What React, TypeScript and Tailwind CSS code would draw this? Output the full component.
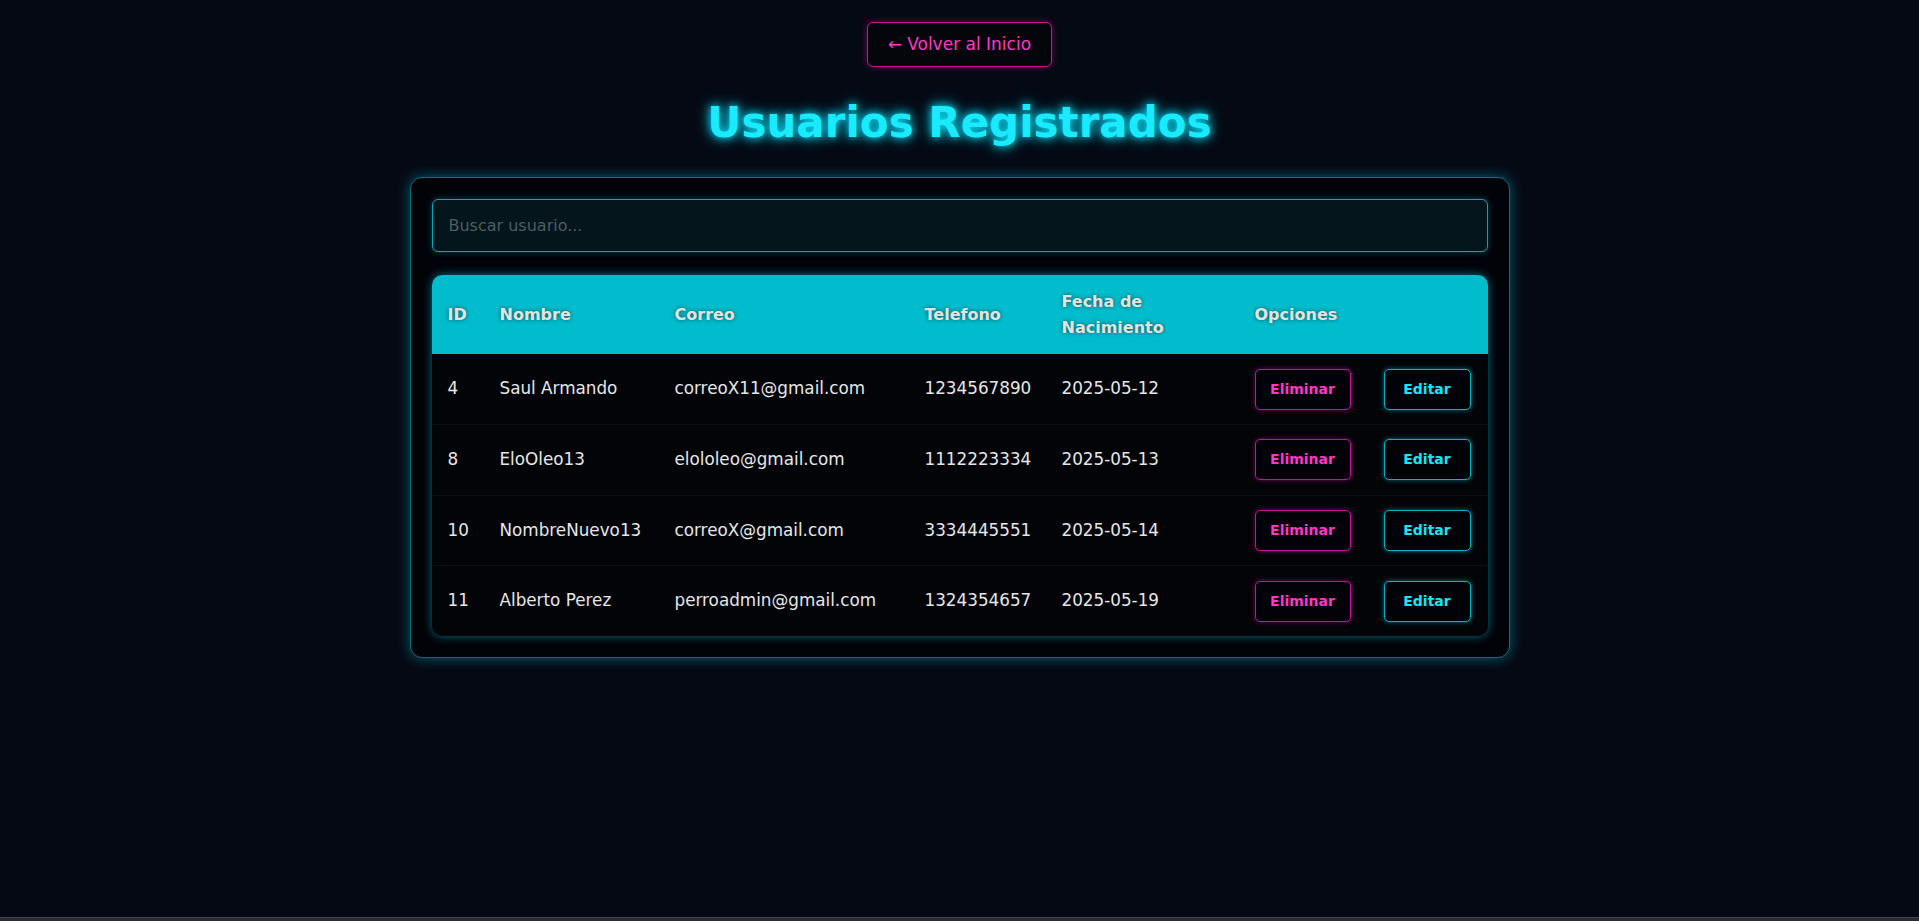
import React from "react";

const users = [
  { id: 4, nombre: "Saul Armando", correo: "correoX11@gmail.com", tel: "1234567890", fecha: "2025-05-12" },
  { id: 8, nombre: "EloOleo13", correo: "elololeo@gmail.com", tel: "1112223334", fecha: "2025-05-13" },
  { id: 10, nombre: "NombreNuevo13", correo: "correoX@gmail.com", tel: "3334445551", fecha: "2025-05-14" },
  { id: 11, nombre: "Alberto Perez", correo: "perroadmin@gmail.com", tel: "1324354657", fecha: "2025-05-19" },
];

const thCls =
  "px-[16px] py-[13px] text-[16px] leading-[26px] font-bold text-[#e4e2df] [text-shadow:0_0_4px_rgba(0,0,0,0.55)]";

export default function App() {
  return (
    <div className="h-[921px] flex flex-col bg-[#050914] font-['DejaVu_Sans','Open_Sans',sans-serif] overflow-hidden">
      <main className="flex-1 flex flex-col items-center pt-[22px]">
        <button className="h-[45px] w-[185px] rounded-[6px] border border-[#c4139a] bg-[#04060c] text-[#ff36c6] text-[17px] shadow-[0_0_6px_rgba(255,0,180,0.45)] flex items-center justify-center gap-[5px]">
          <span>←</span>
          <span>Volver al Inicio</span>
        </button>

        <h1 className="mt-[30px] text-[42px] leading-[52px] font-bold text-[#19eafc] [text-shadow:0_0_8px_#00e5ff,0_0_16px_rgba(0,229,255,0.7)]">
          Usuarios Registrados
        </h1>

        <div className="mt-[28px] w-[1100px] rounded-[12px] border border-[#0b6f7a] bg-[#020308] p-[21px] shadow-[0_0_14px_rgba(0,200,225,0.45)]">
          <input
            type="text"
            placeholder="Buscar usuario..."
            className="block w-full h-[53px] rounded-[6px] border border-[#02a9ba] bg-[#04161b] px-[16px] text-[16px] text-[#cfd8dc] placeholder:text-[#4c5d63] outline-none shadow-[0_0_6px_rgba(0,200,225,0.35)]"
          />

          <div className="mt-[23px] rounded-[10px] overflow-hidden shadow-[0_0_10px_rgba(0,200,225,0.55)] bg-[#030408]">
            <table className="w-full table-fixed border-collapse text-left">
              <colgroup>
                <col className="w-[52px]" />
                <col className="w-[175px]" />
                <col className="w-[250px]" />
                <col className="w-[137px]" />
                <col className="w-[193px]" />
                <col className="w-[129px]" />
                <col className="w-[120px]" />
              </colgroup>
              <thead>
                <tr className="bg-[#00bccc] h-[79px]">
                  {["ID", "Nombre", "Correo", "Telefono"].map((h) => (
                    <th key={h} className={thCls}>
                      {h}
                    </th>
                  ))}
                  <th className={thCls}>
                    Fecha de<br />Nacimiento
                  </th>
                  <th className={thCls}>Opciones</th>
                  <th className="px-[16px] py-[13px]"></th>
                </tr>
              </thead>
              <tbody>
                {users.map((u, i) => (
                  <tr
                    key={u.id}
                    className={`h-[70.5px] text-[16.8px] text-[#e6e6e6] ${i < users.length - 1 ? "border-b border-[#0c0e13]" : ""}`}
                  >
                    <td className="px-[16px]">{u.id}</td>
                    <td className="px-[16px] whitespace-nowrap">{u.nombre}</td>
                    <td className="px-[16px] whitespace-nowrap">{u.correo}</td>
                    <td className="px-[16px]">{u.tel}</td>
                    <td className="px-[16px]">{u.fecha}</td>
                    <td className="px-[16px]">
                      <button className="h-[41px] w-[96px] rounded-[5px] border border-[#c4139a] bg-[#020308] text-[14px] font-bold text-[#ff36c6] shadow-[0_0_5px_rgba(255,0,180,0.45)]">
                        Eliminar
                      </button>
                    </td>
                    <td className="px-[16px]">
                      <button className="h-[41px] w-[87px] rounded-[5px] border border-[#03b3c4] bg-[#020308] text-[14px] font-bold text-[#17e6f7] shadow-[0_0_5px_rgba(0,220,240,0.5)]">
                        Editar
                      </button>
                    </td>
                  </tr>
                ))}
              </tbody>
            </table>
          </div>
        </div>
      </main>
      <div className="h-[4px] bg-[#2c2c2c] border-t border-[#3a4656]"></div>
    </div>
  );
}
